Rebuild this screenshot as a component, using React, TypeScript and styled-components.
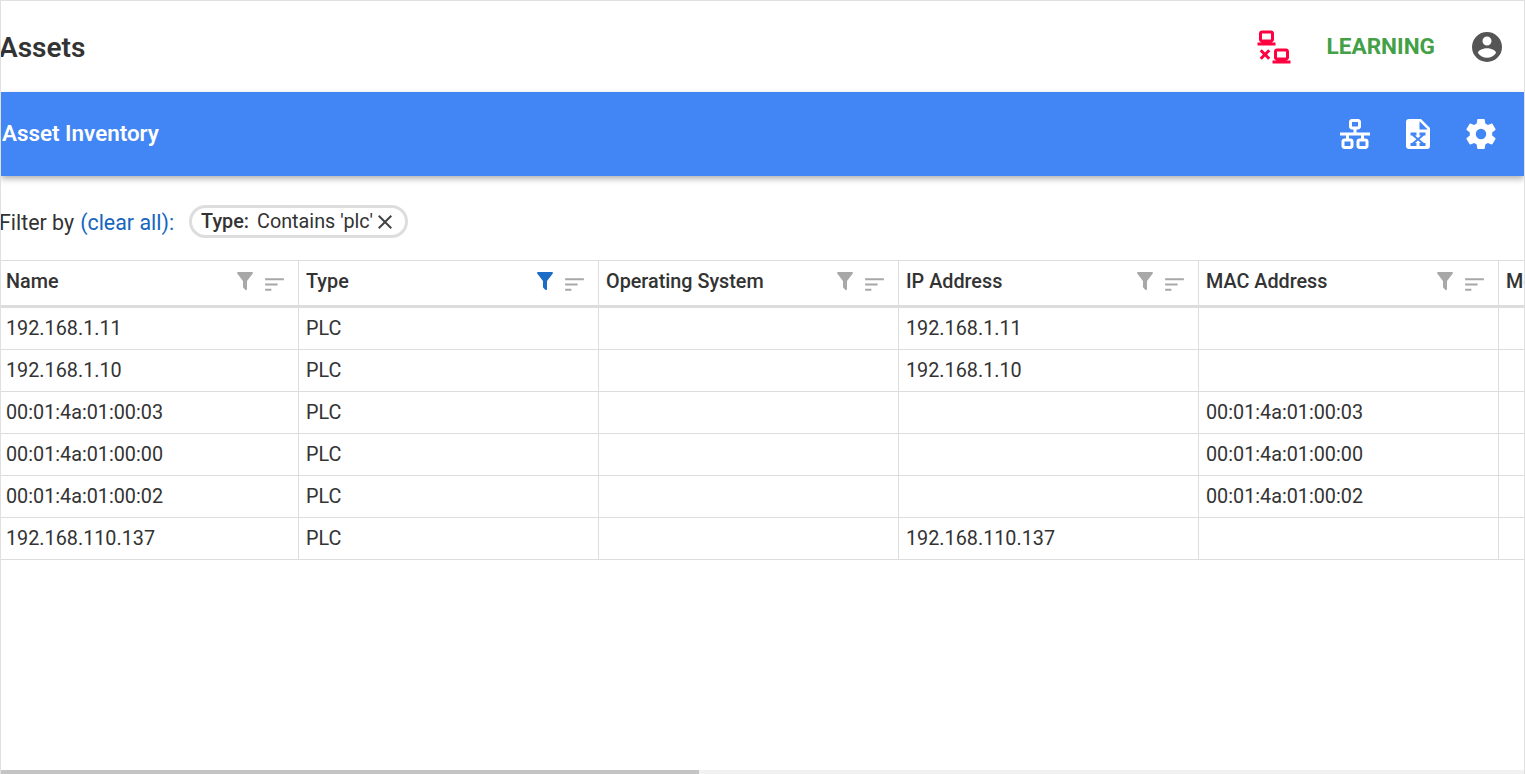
import React from 'react';
import styled, { createGlobalStyle } from 'styled-components';

const GlobalStyle = createGlobalStyle`
    html, body {
        margin: 0;
        padding: 0;
        height: 100%;
        overflow: hidden;
        background: white;
        font-family: Roboto, "Liberation Sans", sans-serif;
        color: #333333;
    }
`;

const Page = styled.div`
    height: 774px;
    box-sizing: border-box;
    border-top: 1px solid #e0e0e0;
    border-left: 1px solid #e0e0e0;
    border-right: 1px solid #e0e0e0;
    display: flex;
    flex-direction: column;
    overflow: hidden;
`;

const TopBar = styled.header`
    height: 91px;
    flex-shrink: 0;
    display: flex;
    align-items: center;
    justify-content: space-between;
    padding-right: 19px;
`;

const PageTitle = styled.h1`
    margin: 2px 0 0 -2px;
    font-size: 28px;
    font-weight: 600;
    color: #333333;
`;

const TopActions = styled.div`
    display: flex;
    align-items: center;
`;

const StatusLabel = styled.span`
    margin: -1px 34px 0 35px;
    font-size: 22.6px;
    font-weight: 700;
    color: #43a047;
`;

const Icon = styled.svg<{ $size: number; $color: string }>`
    width: ${({ $size }) => $size}px;
    height: ${({ $size }) => $size}px;
    fill: ${({ $color }) => $color};
    flex-shrink: 0;
    display: block;
`;

const InventoryBar = styled.div`
    height: 84px;
    flex-shrink: 0;
    background: #4285f4;
    box-shadow: 0 3px 6px rgba(0, 0, 0, 0.3);
    display: flex;
    align-items: center;
    justify-content: space-between;
    padding: 0 25px 0 1px;
`;

const InventoryTitle = styled.span`
    margin-top: -2px;
    font-size: 22.4px;
    font-weight: 600;
    color: white;
`;

const BarActions = styled.div`
    display: flex;
    gap: 27px;
`;

const FilterRow = styled.div`
    height: 84px;
    flex-shrink: 0;
    box-sizing: border-box;
    display: flex;
    align-items: center;
    margin-left: -2px;
    font-size: 21.4px;
    padding-top: 9px;
`;

const ClearAll = styled.a`
    margin-left: 6px;
    color: #1565c0;
`;

const FilterChip = styled.div`
    margin: -2px 0 0 15px;
    height: 33px;
    box-sizing: border-box;
    border: 3px solid #dddddd;
    border-radius: 17px;
    padding: 0 8px 0 9px;
    display: flex;
    align-items: center;
    font-size: 19.8px;
`;

const ChipKey = styled.b`
    font-weight: 500;
    margin-right: 8px;
`;

const Table = styled.div`
    flex: 1;
    margin-left: -2px;
    overflow: hidden;
`;

const Row = styled.div<{ $head?: boolean }>`
    display: grid;
    grid-template-columns: repeat(6, 300px);
    height: ${({ $head }) => ($head ? '48px' : '42px')};
    box-sizing: border-box;
    border-top: ${({ $head }) => ($head ? '1px solid #dddddd' : 'none')};
    border-bottom: ${({ $head }) => ($head ? '3px solid #dddddd' : '1px solid #dddddd')};
    width: 1800px;
`;

const Cell = styled.div<{ $head?: boolean }>`
    box-sizing: border-box;
    border-right: 1px solid #dddddd;
    padding: ${({ $head }) => ($head ? '0 11px 4px 7px' : '0 11px 0 7px')};
    font-size: 19.8px;
    font-weight: ${({ $head }) => ($head ? 500 : 400)};
    display: flex;
    align-items: center;
    justify-content: space-between;
    white-space: nowrap;
`;

const HeadIcons = styled.div`
    display: flex;
    align-items: center;
    gap: 5px;
`;

const SortIcon = styled.div`
    margin-top: 6px;
`;

const Scrollbar = styled.div`
    height: 4px;
    flex-shrink: 0;
    background: #f1f1f1;
`;

const ScrollThumb = styled.div`
    height: 100%;
    background: #c4c4c4;
`;

const PATHS = {
    disconnect: 'M4,1C2.89,1 2,1.89 2,3V7C2,8.11 2.89,9 4,9H1V11H13V9H10C11.11,9 12,8.11 12,7V3C12,1.89 11.11,1 10,1H4M4,3H10V7H4V3M14,13C12.89,13 12,13.89 12,15V19C12,20.11 12.89,21 14,21H11V23H23V21H20C21.11,21 22,20.11 22,19V15C22,13.89 21.11,13 20,13H14M3.88,13.46L2.46,14.88L4.59,17L2.46,19.12L3.88,20.54L6,18.41L8.12,20.54L9.54,19.12L7.41,17L9.54,14.88L8.12,13.46L6,15.59L3.88,13.46M14,15H20V19H14V15Z',
    account: 'M12,19.2C9.5,19.2 7.29,17.92 6,16C6.03,14 10,12.9 12,12.9C14,12.9 17.97,14 18,16C16.71,17.92 14.5,19.2 12,19.2M12,5A3,3 0 0,1 15,8A3,3 0 0,1 12,11A3,3 0 0,1 9,8A3,3 0 0,1 12,5M12,2A10,10 0 0,0 2,12A10,10 0 0,0 12,22A10,10 0 0,0 22,12A10,10 0 0,0 12,2Z',
    lan: 'M10,2C8.89,2 8,2.89 8,4V7C8,8.11 8.89,9 10,9H11V11H2V13H6V15H5C3.89,15 3,15.89 3,17V20C3,21.11 3.89,22 5,22H9C10.11,22 11,21.11 11,20V17C11,15.89 10.11,15 9,15H8V13H16V15H15C13.89,15 13,15.89 13,17V20C13,21.11 13.89,22 15,22H19C20.11,22 21,21.11 21,20V17C21,15.89 20.11,15 19,15H18V13H22V11H13V9H14C15.11,9 16,8.11 16,7V4C16,2.89 15.11,2 14,2H10M10,4H14V7H10V4M5,17H9V20H5V17M15,17H19V20H15V17Z',
    excel: 'M6,2H14L20,8V20A2,2 0 0,1 18,22H6A2,2 0 0,1 4,20V4A2,2 0 0,1 6,2M13,3.5V9H18.5L13,3.5M17,11H13V13H14L12,14.67L10,13H11V11H7V13H8L11,15.5L8,18H7V20H11V18H10L12,16.33L14,18H13V20H17V18H16L13,15.5L16,13H17V11Z',
    cog: 'M12,15.5A3.5,3.5 0 0,1 8.5,12A3.5,3.5 0 0,1 12,8.5A3.5,3.5 0 0,1 15.5,12A3.5,3.5 0 0,1 12,15.5M19.43,12.97C19.47,12.65 19.5,12.33 19.5,12C19.5,11.67 19.47,11.34 19.43,11L21.54,9.37C21.73,9.22 21.78,8.95 21.66,8.73L19.66,5.27C19.54,5.05 19.27,4.96 19.05,5.05L16.56,6.05C16.04,5.66 15.5,5.32 14.87,5.07L14.5,2.42C14.46,2.18 14.25,2 14,2H10C9.75,2 9.54,2.18 9.5,2.42L9.13,5.07C8.5,5.32 7.96,5.66 7.44,6.05L4.95,5.05C4.73,4.96 4.46,5.05 4.34,5.27L2.34,8.73C2.21,8.95 2.27,9.22 2.46,9.37L4.57,11C4.53,11.34 4.5,11.67 4.5,12C4.5,12.33 4.53,12.65 4.57,12.97L2.46,14.63C2.27,14.78 2.21,15.05 2.34,15.27L4.34,18.73C4.46,18.95 4.73,19.03 4.95,18.95L7.44,17.94C7.96,18.34 8.5,18.68 9.13,18.93L9.5,21.58C9.54,21.82 9.75,22 10,22H14C14.25,22 14.46,21.82 14.5,21.58L14.87,18.93C15.5,18.67 16.04,18.34 16.56,17.94L19.05,18.95C19.27,19.03 19.54,18.95 19.66,18.73L21.66,15.27C21.78,15.05 21.73,14.78 21.54,14.63L19.43,12.97Z',
    filter: 'M14,12V19.88C14.04,20.18 13.94,20.5 13.71,20.71C13.32,21.1 12.69,21.1 12.3,20.71L10.29,18.7C10.06,18.47 9.96,18.16 10,17.87V12H9.97L4.21,4.62C3.87,4.19 3.95,3.56 4.38,3.22C4.57,3.08 4.78,3 5,3H19C19.22,3 19.43,3.08 19.62,3.22C20.05,3.56 20.13,4.19 19.79,4.62L14.03,12H14Z',
    sort: 'M3 18h6v-2H3v2zM3 6v2h18V6H3zm0 7h12v-2H3v2z',
    close: 'M19,6.41L17.59,5L12,10.59L6.41,5L5,6.41L10.59,12L5,17.59L6.41,19L12,13.41L17.59,19L19,17.59L13.41,12L19,6.41Z',
};

const Glyph = ({ path, size, color }: { path: string; size: number; color: string }) => (
    <Icon viewBox="0 0 24 24" $size={size} $color={color}>
        <path d={path} />
    </Icon>
);

const COLUMNS = ['Name', 'Type', 'Operating System', 'IP Address', 'MAC Address', 'Model'];

const ROWS = [
    ['192.168.1.11', 'PLC', '', '192.168.1.11', ''],
    ['192.168.1.10', 'PLC', '', '192.168.1.10', ''],
    ['00:01:4a:01:00:03', 'PLC', '', '', '00:01:4a:01:00:03'],
    ['00:01:4a:01:00:00', 'PLC', '', '', '00:01:4a:01:00:00'],
    ['00:01:4a:01:00:02', 'PLC', '', '', '00:01:4a:01:00:02'],
    ['192.168.110.137', 'PLC', '', '192.168.110.137', ''],
];

const App = () => (
    <Page>
        <GlobalStyle />
        <TopBar>
            <PageTitle>Assets</PageTitle>
            <TopActions>
                <Glyph path={PATHS.disconnect} size={36} color="#ff0040" />
                <StatusLabel>LEARNING</StatusLabel>
                <Glyph path={PATHS.account} size={36} color="#555555" />
            </TopActions>
        </TopBar>
        <InventoryBar>
            <InventoryTitle>Asset Inventory</InventoryTitle>
            <BarActions>
                <Glyph path={PATHS.lan} size={36} color="white" />
                <Glyph path={PATHS.excel} size={36} color="white" />
                <Glyph path={PATHS.cog} size={36} color="white" />
            </BarActions>
        </InventoryBar>
        <FilterRow>
            Filter by
            <ClearAll>(clear all):</ClearAll>
            <FilterChip>
                <ChipKey>Type:</ChipKey>
                Contains 'plc'
                <Glyph path={PATHS.close} size={24} color="#444444" />
            </FilterChip>
        </FilterRow>
        <Table>
            <Row $head>
                {COLUMNS.map((col) => (
                    <Cell $head key={col}>
                        {col}
                        <HeadIcons>
                            <Glyph path={PATHS.filter} size={24} color={col === 'Type' ? '#1a6cc5' : '#a8a8a8'} />
                            <SortIcon>
                                <Glyph path={PATHS.sort} size={25} color="#a8a8a8" />
                            </SortIcon>
                        </HeadIcons>
                    </Cell>
                ))}
            </Row>
            {ROWS.map((row, i) => (
                <Row key={i}>
                    {row.map((value, j) => (
                        <Cell key={j}>{value}</Cell>
                    ))}
                    <Cell />
                </Row>
            ))}
        </Table>
        <Scrollbar>
            <ScrollThumb style={{ width: `${(698 / 1523) * 100}%` }} />
        </Scrollbar>
    </Page>
);

export default App;
